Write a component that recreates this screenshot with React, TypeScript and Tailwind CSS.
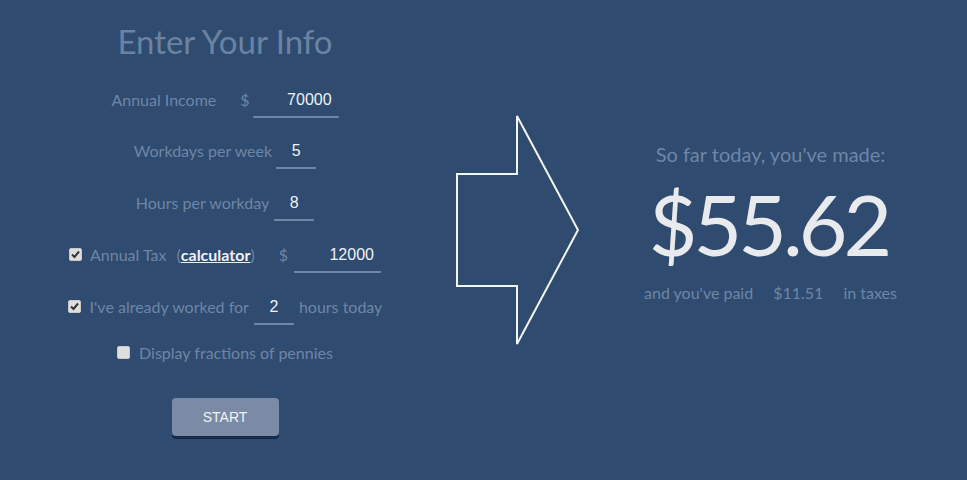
import React from 'react'

const font = { fontFamily: '"Trebuchet MS", Lato, "Open Sans", sans-serif' }

const Check = ({ checked }: { checked?: boolean }) => (
  <span className="inline-flex h-[13px] w-[13px] items-center justify-center rounded-[2px] bg-[#dedede] border border-[#c9c9c9]">
    {checked && (
      <svg width="9" height="9" viewBox="0 0 9 9">
        <path d="M1 4.5 L3.5 7 L8 1.5" stroke="#333" strokeWidth="2" fill="none" />
      </svg>
    )}
  </span>
)

const Field = ({ value, w, align = 'center' }: { value: string; w: string; align?: 'center' | 'right' }) => (
  <div
    className={`${w} h-[31px] pb-[3px] border-b-2 border-[#6f86a5] rounded-[1px] text-[16px] leading-[26px] text-[#eef2f7] ${
      align === 'right' ? 'text-right pr-[7px]' : 'text-center'
    }`}
    style={{ fontFamily: '"Liberation Sans", Arial, sans-serif' }}
  >
    {value}
  </div>
)

export default function App() {
  return (
    <div className="flex h-[480px] w-full bg-[#2f4b6f] text-[#6e86a6]" style={font}>
      {/* Form column */}
      <div className="flex w-[450px] flex-col items-center">
        <h1 className="mt-[21px] text-[33px] leading-[40px] text-[#6a83a3]">Enter Your Info</h1>

        <div className="mt-[26px] flex items-start text-[16px] leading-[26px]">
          <span>Annual Income</span>
          <span className="ml-[24px] mr-[3px]">$</span>
          <Field value="70000" w="w-[86px]" align="right" />
        </div>

        <div className="mt-[20px] flex items-start text-[16px] leading-[26px]">
          <span className="mr-[4px]">Workdays per week</span>
          <Field value="5" w="w-[40px]" />
        </div>

        <div className="mt-[21px] flex items-start text-[16px] leading-[26px]">
          <span className="mr-[5px]">Hours per workday</span>
          <Field value="8" w="w-[40px]" />
        </div>

        <div className="mt-[21px] flex items-start text-[16px] leading-[26px]">
          <span className="mr-[8px] mt-[6px] flex"><Check checked /></span>
          <span>Annual Tax</span>
          <span className="ml-[10px]">
            (<a className="font-bold text-[#eef2f7] underline">calculator</a>)
          </span>
          <span className="ml-[24px] mr-[6px]">$</span>
          <Field value="12000" w="w-[87px]" align="right" />
        </div>

        <div className="mt-[21px] flex items-start text-[16px] leading-[26px]">
          <span className="mr-[9px] mt-[6px] flex"><Check checked /></span>
          <span className="mr-[5px]">I've already worked for</span>
          <Field value="2" w="w-[40px]" />
          <span className="ml-[5px]">hours today</span>
        </div>

        <div className="mt-[15px] flex items-start text-[16px] leading-[26px]">
          <span className="mr-[9px] mt-[6px] flex"><Check /></span>
          <span>Display fractions of pennies</span>
        </div>

        <button
          className="mt-[32px] h-[38px] w-[107px] rounded-[4px] bg-[#7b8ba6] text-[14px] text-[#eef2f7] shadow-[0_3px_0_#15294a]"
          style={{ fontFamily: '"Liberation Sans", Arial, sans-serif' }}
        >
          START
        </button>
      </div>

      {/* Arrow */}
      <div className="w-[130px] pt-[110px]">
        <svg width="130" height="240" viewBox="0 0 130 240">
          <polygon
            points="7,64 67,64 67,6 128,120 67,234 67,176 7,176"
            fill="none"
            stroke="#f4f6f9"
            strokeWidth="2"
          />
        </svg>
      </div>

      {/* Result column */}
      <div className="flex flex-1 flex-col items-center pr-[6px]">
        <p className="mt-[141px] text-[20px] leading-[26px]">So far today, you've made:</p>
        <p className="mt-[15px] mr-[4px] text-[84px] leading-[84px] tracking-[-4px] text-[#e8eaee]">$55.62</p>
        <p className="mt-[16px] flex gap-[20px] text-[16px] leading-[22px]">
          <span>and you've paid</span>
          <span>$11.51</span>
          <span>in taxes</span>
        </p>
      </div>
    </div>
  )
}
